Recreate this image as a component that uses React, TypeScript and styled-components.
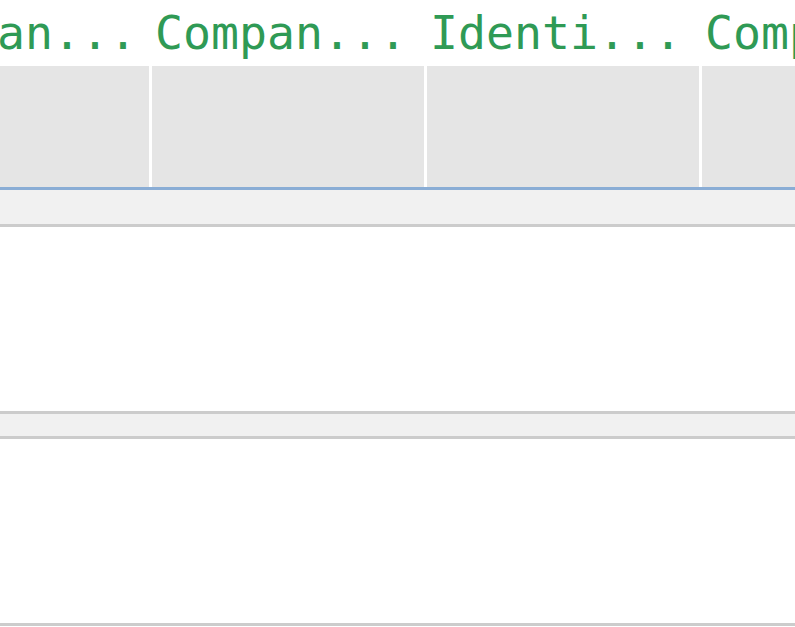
import React from "react";
import styled, {createGlobalStyle} from "styled-components";

const GlobalStyle = createGlobalStyle`
  html, body {
    margin: 0;
    padding: 0;
    background: #ffffff;
    overflow: hidden;
  }
`;

const Viewport = styled.div`
  width: 795px;
  height: 627px;
  overflow: hidden;
`;

// the grid is scrolled sideways, so the first column is partly hidden
const Grid = styled.div`
  margin-left: -118px;
  width: 1100px;
`;

const columnTemplate = "267px 272px 272px 272px";

const TitleRow = styled.div`
  display: grid;
  grid-template-columns: ${columnTemplate};
  column-gap: 3px;
  height: 66px;
`;

const ColumnTitle = styled.div`
  padding-left: 3px;
  font-family: "DejaVu Sans Mono", "Liberation Mono", monospace;
  font-size: 46.5px;
  line-height: 66px;
  color: #2f9a55;
  white-space: nowrap;
  overflow: hidden;
`;

const HeaderRow = styled.div`
  display: grid;
  grid-template-columns: ${columnTemplate};
  column-gap: 3px;
  height: 121px;
  background: #ffffff;
  border-bottom: 3px solid #8aadd5;
`;

const HeaderCell = styled.div`
  background: #e5e5e5;
`;

const Band = styled.div<{ $height: number }>`
  height: ${p => p.$height}px;
  background: #f1f1f1;
  border-bottom: 3px solid #cccccc;
`;

const Rows = styled.div`
  height: 184px;
  background: #ffffff;
  border-bottom: 3px solid #cccccc;
`;

const columns = ["Compan...", "Compan...", "Identi...", "Compan..."];

export default function App() {
    return (
        <Viewport>
            <GlobalStyle/>
            <Grid>
                <TitleRow>
                    {columns.map((title, i) => (
                        <ColumnTitle key={i}>{title}</ColumnTitle>
                    ))}
                </TitleRow>
                <HeaderRow>
                    {columns.map((_, i) => <HeaderCell key={i}/>)}
                </HeaderRow>
                <Band $height={34}/>
                <Rows/>
                <Band $height={22}/>
                <Rows/>
            </Grid>
        </Viewport>
    );
}
